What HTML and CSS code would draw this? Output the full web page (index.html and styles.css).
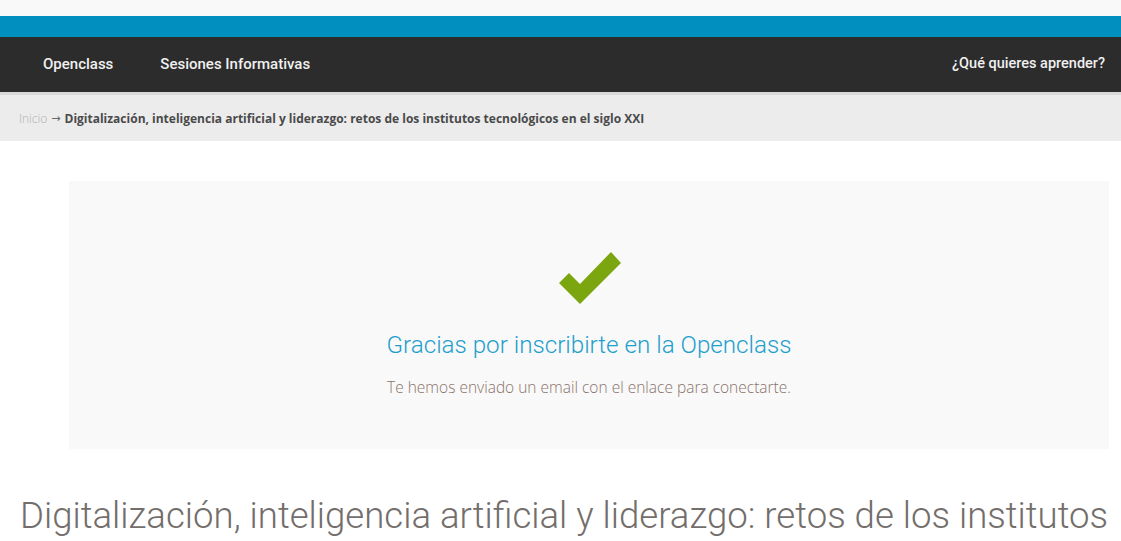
FILE: index.html
```html
<!DOCTYPE html>
<html lang="es">
<head>
<meta charset="utf-8">
<title>Openclass</title>
<link rel="stylesheet" href="styles.css">
</head>
<body>
<div class="topstrip"></div>
<div class="bluebar"></div>
<nav class="mainnav">
  <ul class="navlinks">
    <li><a href="#">Openclass</a></li>
    <li><a href="#">Sesiones Informativas</a></li>
  </ul>
  <a class="navsearch" href="#">¿Qué quieres aprender?</a>
</nav>
<div class="breadcrumb">
  <a class="crumb-home" href="#">Inicio</a>
  <span class="crumb-sep">→</span>
  <span class="crumb-current">Digitalización, inteligencia artificial y liderazgo: retos de los institutos tecnológicos en el siglo XXI</span>
</div>
<main class="content">
  <section class="thanks">
    <svg class="check" width="64" height="54" viewBox="0 0 64 54" aria-hidden="true">
      <polygon points="1,32 11,22 22,33 53,1 63,12 22,53" fill="#7ba60f"/>
    </svg>
    <h2 class="thanks-title">Gracias por inscribirte en la Openclass</h2>
    <p class="thanks-text">Te hemos enviado un email con el enlace para conectarte.</p>
  </section>
  <h1 class="page-title">Digitalización, inteligencia artificial y liderazgo: retos de los institutos tecnológicos en el siglo XXI</h1>
</main>
</body>
</html>
```
FILE: styles.css
```css
* { box-sizing: border-box; }
html, body { margin: 0; padding: 0; background: #fff; }
body { font-family: "Open Sans", "Noto Sans", sans-serif; overflow: hidden; }
a { text-decoration: none; color: inherit; }

.topstrip { height: 16px; background: #f9f9f9; }
.bluebar { height: 21px; background: #008fbf; }

.mainnav {
  height: 58px;
  background: #2c2c2c;
  display: flex;
  align-items: center;
  justify-content: space-between;
  padding: 0 16px 3px 43px;
  border-bottom: 3px solid #d9d9d9;
  font-family: Roboto, "Noto Sans", sans-serif;
}
.navlinks { list-style: none; margin: 0; padding: 0; display: flex; gap: 47px; }
.navlinks a, .navsearch {
  color: #f0f0f0;
  font-size: 15px;
  font-weight: 500;
}
.navsearch { font-size: 14.5px; }

.breadcrumb {
  height: 46px;
  background: #ececec;
  display: flex;
  align-items: center;
  gap: 4px;
  padding: 0 19px;
  font-size: 12px;
  white-space: nowrap;
}
.crumb-home { color: #b0b0b0; font-weight: 300; }
.crumb-sep { color: #666; font-family: "DejaVu Sans", sans-serif; font-size: 11px; }
.crumb-current { color: #4a4a4a; font-weight: 700; }

.content { padding: 40px 12px 0 20px; }

.thanks {
  margin: 0 0 0 49px;
  width: 1040px;
  height: 268px;
  background: #f9f9f9;
  display: flex;
  flex-direction: column;
  align-items: center;
  padding-top: 70px;
}
.check { display: block; margin-left: 2px; }
.thanks-title {
  margin: 26px 0 0;
  font-family: Roboto, "Noto Sans", sans-serif;
  font-weight: 300;
  font-size: 24.2px;
  color: #1e9fcd;
}
.thanks-text {
  margin: 17px 0 0;
  font-weight: 300;
  font-size: 15.5px;
  color: #8a726b;
}

.page-title {
  margin: 46px 0 0;
  font-family: Roboto, "Noto Sans", sans-serif;
  font-weight: 300;
  font-size: 36.6px;
  line-height: 41px;
  color: #736e6b;
}
```
